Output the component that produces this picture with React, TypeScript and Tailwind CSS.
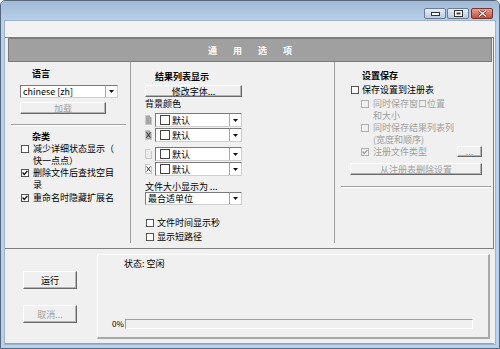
import React from "react"

type Kids = { children?: React.ReactNode; className?: string }

function Check({ checked = false, disabled = false }: { checked?: boolean; disabled?: boolean }) {
  return (
    <span
      className={`flex w-[8px] h-[8px] shrink-0 items-center justify-center border ${
        disabled ? "border-[#b0b0b0] bg-[#f0f0f0]" : "border-[#555] bg-white"
      }`}
    >
      {checked && (
        <svg width="6" height="6" viewBox="0 0 6 6">
          <path d="M0.6 2.6 L2.3 4.4 L5.4 0.9" fill="none" stroke={disabled ? "#a0a0a0" : "#111"} strokeWidth="1.4" />
        </svg>
      )}
    </span>
  )
}

function Arrow() {
  return (
    <svg width="5" height="3" viewBox="0 0 5 3">
      <path d="M0 0 H5 L2.5 3 Z" fill="#111" />
    </svg>
  )
}

function Combo({ children, className = "" }: Kids) {
  return (
    <div className={`flex items-stretch bg-white border border-t-[#7a7a7a] border-l-[#7a7a7a] border-r-[#cfcfcf] border-b-[#cfcfcf] ${className}`}>
      <div className="flex-1 flex items-center pl-[2px] overflow-hidden whitespace-nowrap">{children}</div>
      <div className="w-[12px] flex items-center justify-center border-l border-[#a8a8a8] bg-white">
        <Arrow />
      </div>
    </div>
  )
}

function Btn({ children, className = "", disabled = false }: Kids & { disabled?: boolean }) {
  return (
    <div
      className={`flex items-center justify-center bg-[#f0f0f0] border border-t-white border-l-white border-r-[#696969] border-b-[#696969] shadow-[inset_-1px_-1px_0_#b4b4b4] whitespace-nowrap ${
        disabled ? "text-[#a0a0a0]" : "text-black"
      } ${className}`}
    >
      {children}
    </div>
  )
}

function Row({ checked, disabled, lines, className = "" }: { checked?: boolean; disabled?: boolean; lines: string[]; className?: string }) {
  return (
    <div className={`flex items-start ${className}`}>
      <span className="mt-[2px]">
        <Check checked={checked} disabled={disabled} />
      </span>
      <div className={`ml-[4px] whitespace-nowrap leading-[12px] ${disabled ? "text-[#a0a0a0]" : ""}`}>
        {lines.map((l) => (
          <div key={l}>{l}</div>
        ))}
      </div>
    </div>
  )
}

function Swatch({ tone, cross }: { tone: string; cross?: boolean }) {
  return (
    <div className={`relative w-[7px] h-[10px] border border-[#c8c8c8] ${tone}`}>
      <span className="absolute right-[-1px] top-[-1px] w-[2px] h-[2px] bg-[#f0f0f0]" />
      {cross && (
        <svg className="absolute left-0 top-[1px]" width="5" height="6" viewBox="0 0 5 6">
          <path d="M0.5 0.5 L4.5 5.5 M4.5 0.5 L0.5 5.5" stroke="#333" strokeWidth="1" />
        </svg>
      )}
    </div>
  )
}

function ColorRow({ tone, cross, className = "" }: { tone: string; cross?: boolean; className?: string }) {
  return (
    <div className={`flex items-center ml-[14px] h-[14px] ${className}`}>
      <Swatch tone={tone} cross={cross} />
      <Combo className="ml-[3px] w-[87px] h-[14px]">
        <span className="w-[10px] h-[10px] border border-[#444] bg-white mr-[2px] ml-[2px]" />
        默认
      </Combo>
    </div>
  )
}

function Caption({ kind }: { kind: "min" | "max" | "close" }) {
  const base =
    kind === "close"
      ? "bg-gradient-to-b from-[#e3a393] to-[#c5493a] border-[#7b3228]"
      : "bg-gradient-to-b from-[#e8eef6] to-[#b9cbe1] border-[#6b7c93]"
  return (
    <div className={`w-[22px] h-[11px] rounded-[2px] border flex items-center justify-center ${base}`}>
      {kind === "min" && (
        <svg width="9" height="5" viewBox="0 0 9 5">
          <rect x="0.5" y="1.5" width="8" height="3" fill="#fff" stroke="#333" />
        </svg>
      )}
      {kind === "max" && (
        <svg width="9" height="7" viewBox="0 0 9 7">
          <rect x="0.5" y="0.5" width="8" height="6" fill="#fff" stroke="#333" />
          <rect x="2.5" y="2.5" width="4" height="2" fill="#444" />
        </svg>
      )}
      {kind === "close" && (
        <svg width="9" height="7" viewBox="0 0 9 7">
          <path d="M1 0.5 L8 6.5 M8 0.5 L1 6.5" stroke="#5a1d16" strokeWidth="2.6" />
          <path d="M1 0.5 L8 6.5 M8 0.5 L1 6.5" stroke="#fff" strokeWidth="1.3" />
        </svg>
      )}
    </div>
  )
}

export default function App() {
  return (
    <div className="w-[500px] h-[349px] flex flex-col bg-[#b9d1ea] border border-[#56677d] rounded-t-[5px] overflow-hidden text-[9px] leading-[11px] text-black font-['Noto_Sans_CJK_SC','Noto_Sans',sans-serif]">
      <div className="h-[20px] shrink-0 bg-gradient-to-b from-[#a3bad7] to-[#b8cfe9] flex justify-end items-start pt-[7px] pr-[6px]">
        <Caption kind="min" />
        <div className="ml-[1px]">
          <Caption kind="max" />
        </div>
        <div className="ml-[2px]">
          <Caption kind="close" />
        </div>
      </div>

      <div className="flex-1 mx-[4px] mb-[4px] flex flex-col bg-[#f0f0f0] shadow-[0_0_0_1px_#9db4cf]">
        <div className="h-[16px] shrink-0 bg-[#f2f2f2]" />

        <div className="h-[212px] shrink-0 mr-[1px] flex flex-col border-t border-r border-b border-[#7f7f7f]">
          <div className="h-[24px] shrink-0 ml-[3px] mr-px bg-[#a0a0a0] border border-[#7c7c7c] flex items-center justify-center gap-[16px] text-white font-bold">
            <span>通</span>
            <span>用</span>
            <span>选</span>
            <span>项</span>
          </div>

          <div className="flex-1 flex">
            <div className="w-[125px] flex flex-col">
              <div className="mt-[6px] ml-[27px] font-bold">语言</div>
              <Combo className="mt-[6px] ml-[15px] w-[98px] h-[13px]">chinese [zh]</Combo>
              <Btn disabled className="mt-[4px] ml-[15px] w-[86px] h-[12px]">加载</Btn>
              <div className="mt-[10px] ml-[6px] w-[115px] h-[2px] border-t border-[#a0a0a0] border-b border-b-white" />
              <div className="mt-[5px] ml-[27px] font-bold">杂类</div>
              <Row className="mt-[1px] ml-[16px]" lines={["减少详细状态显示（", "快一点点）"]} />
              <Row className="ml-[16px]" checked lines={["删除文件后查找空目", "录"]} />
              <Row className="mt-[1px] ml-[16px]" checked lines={["重命名时隐藏扩展名"]} />
            </div>
            <div className="w-px mb-[5px] bg-[#a0a0a0]" />

            <div className="w-[203px] flex flex-col">
              <div className="mt-[9px] ml-[24px] font-bold">结果列表显示</div>
              <Btn className="mt-[3px] ml-[14px] w-[97px] h-[12px]">修改字体...</Btn>
              <div className="mt-[1px] ml-[14px]">背景颜色</div>
              <ColorRow className="mt-[4px]" tone="bg-[#a6a6a6]" />
              <ColorRow className="mt-[1px]" tone="bg-[#a6a6a6]" cross />
              <ColorRow className="mt-[5px]" tone="bg-[#ececec]" />
              <ColorRow className="mt-[1px]" tone="bg-white" cross />
              <div className="mt-[5px] ml-[14px]">文件大小显示为 ...</div>
              <Combo className="ml-[14px] w-[97px] h-[13px]">最合适单位</Combo>
              <div className="mt-[12px] ml-[15px] flex items-center">
                <Check />
                <span className="ml-[3px]">文件时间显示秒</span>
              </div>
              <div className="mt-[3px] ml-[15px] flex items-center">
                <Check />
                <span className="ml-[3px]">显示短路径</span>
              </div>
            </div>
            <div className="w-px mb-[5px] bg-[#a0a0a0]" />

            <div className="flex-1 flex flex-col">
              <div className="mt-[8px] ml-[27px] font-bold">设置保存</div>
              <div className="mt-[3px] ml-[16px] flex items-center">
                <Check />
                <span className="ml-[3px]">保存设置到注册表</span>
              </div>
              <Row className="mt-[3px] ml-[26px]" disabled lines={["同时保存窗口位置", "和大小"]} />
              <Row className="ml-[26px]" disabled lines={["同时保存结果列表列", "(宽度和顺序)"]} />
              <div className="ml-[26px] mr-[11px] flex items-center">
                <Check checked disabled />
                <span className="ml-[4px] text-[#a0a0a0]">注册文件类型</span>
                <Btn disabled className="ml-auto w-[25px] h-[11px]">...</Btn>
              </div>
              <Btn disabled className="mt-[6px] ml-[15px] w-[132px] h-[12px]">从注册表删除设置</Btn>
              <div className="mt-[11px] ml-[6px] w-[150px] h-[2px] border-t border-[#a0a0a0] border-b border-b-white" />
            </div>
          </div>
        </div>

        <div className="flex-1 flex border-b border-[#a0a0a0] mr-[1px]">
          <div className="w-[92px] flex flex-col">
            <Btn className="mt-[22px] ml-[18px] w-[54px] h-[18px]">运行</Btn>
            <Btn disabled className="mt-[16px] ml-[18px] w-[54px] h-[18px]">取消...</Btn>
          </div>
          <div className="mt-[5px] mb-[4px] w-[393px] flex flex-col border-t border-l border-white border-r-2 border-b-2 border-r-[#a8a8a8] border-b-[#a8a8a8]">
            <div className="mt-[3px] ml-[26px]">状态: 空闲</div>
            <div className="flex-1" />
            <div className="mb-[8px] flex items-center">
              <span className="ml-[14px] w-[13px] text-[8px]">0%</span>
              <div className="w-[348px] h-[10px] border border-t-[#a0a0a0] border-l-[#a0a0a0] border-r-white border-b-white bg-[#f0f0f0]" />
            </div>
          </div>
        </div>
      </div>
    </div>
  )
}
